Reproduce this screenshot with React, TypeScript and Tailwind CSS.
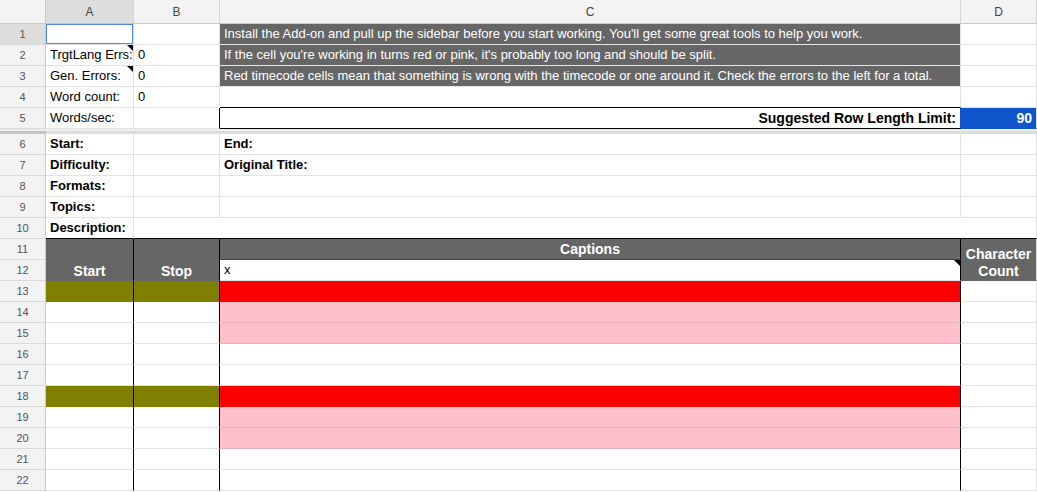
import React from "react";

const GRID = "border-r-[#e2e2e2]";
const GRID_B = "border-b-[#e2e2e2]";

type CellProps = {
  className?: string;
  r?: string;
  b?: string;
  children?: React.ReactNode;
};

function Cell({ className = "", r = GRID, b = GRID_B, children }: CellProps) {
  return (
    <div
      className={`relative flex items-center overflow-hidden whitespace-nowrap border-r border-b px-[4px] text-[13px] ${r} ${b} ${className}`}
    >
      {children}
    </div>
  );
}

function RowNum({ n, active = false }: { n: number; active?: boolean }) {
  return (
    <div
      className={`flex items-center justify-center border-r border-b border-r-[#c8c8c8] border-b-[#dadada] text-[11px] text-[#555] ${
        active ? "bg-[#dddddd]" : "bg-[#f3f3f3]"
      }`}
    >
      {n}
    </div>
  );
}

function ColHead({ label, active = false }: { label: string; active?: boolean }) {
  return (
    <div
      className={`flex items-center justify-center border-r border-b border-r-[#d4d4d4] border-b-[#c8c8c8] text-[12px] text-[#444] ${
        active ? "bg-[#dddddd]" : "bg-[#f3f3f3]"
      }`}
    >
      {label}
    </div>
  );
}

function Note() {
  return (
    <span className="absolute top-0 right-0 h-0 w-0 border-l-[6px] border-t-[6px] border-l-transparent border-t-black" />
  );
}

// rows 13-22: what the A/B and C columns are painted with
const BODY: { n: number; ab?: string; c?: string }[] = [
  { n: 13, ab: "bg-[#808000]", c: "bg-[#ff0000]" },
  { n: 14, c: "bg-[#ffc0cb]" },
  { n: 15, c: "bg-[#ffc0cb]" },
  { n: 16 },
  { n: 17 },
  { n: 18, ab: "bg-[#808000]", c: "bg-[#ff0000]" },
  { n: 19, c: "bg-[#ffc0cb]" },
  { n: 20, c: "bg-[#ffc0cb]" },
  { n: 21 },
  { n: 22 },
];

const INFO = [
  "Install the Add-on and pull up the sidebar before you start working. You'll get some great tools to help you work.",
  "If the cell you're working in turns red or pink, it's probably too long and should be split.",
  "Red timecode cells mean that something is wrong with the timecode or one around it. Check the errors to the left for a total.",
];

const TOP_A = ["", "TrgtLang Errs:", "Gen. Errors:", "Word count:", "Words/sec:"];
const TOP_B = ["", "0", "0", "0", ""];

const MID: [string, string][] = [
  ["Start:", "End:"],
  ["Difficulty:", "Original Title:"],
  ["Formats:", ""],
  ["Topics:", ""],
];

export default function App() {
  return (
    <div className="h-[492px] w-[1037px] overflow-hidden bg-white font-['Liberation_Sans',Arial,sans-serif] text-black">
      <div className="grid grid-cols-[46px_88px_86px_741px_76px] grid-rows-[24px_repeat(5,21px)_5px_repeat(17,21px)]">
        {/* column headers */}
        <div className="border-r border-b border-r-[#c8c8c8] border-b-[#c8c8c8] bg-[#f3f3f3]" />
        <ColHead label="A" active />
        <ColHead label="B" />
        <ColHead label="C" />
        <ColHead label="D" />

        {/* rows 1-5 */}
        {TOP_A.map((a, i) => {
          const row = i + 1;
          return (
            <React.Fragment key={row}>
              <RowNum n={row} active={row === 1} />
              <Cell>
                {row === 1 && (
                  <span className="absolute -top-[1px] -left-[1px] h-[22px] w-[89px] border-2 border-[#4d88ea]" />
                )}
                {a}
                {(row === 2 || row === 3) && <Note />}
              </Cell>
              <Cell r={row === 5 ? "border-r-black" : GRID}>{TOP_B[i]}</Cell>
              {row <= 3 ? (
                <Cell className="bg-[#666666] text-white" b="border-b-[#e6e6e6]">
                  {INFO[i]}
                </Cell>
              ) : row === 4 ? (
                <Cell b="border-b-black" />
              ) : (
                <Cell className="justify-end text-[14px] font-bold" b="border-b-black" r="border-r-[#1155cc]">
                  Suggested Row Length Limit:
                </Cell>
              )}
              {row === 5 ? (
                <Cell className="justify-end bg-[#1155cc] text-[14px] font-bold text-white" b="border-b-[#1155cc]">
                  90
                </Cell>
              ) : (
                <Cell />
              )}
            </React.Fragment>
          );
        })}

        {/* frozen row divider */}
        <div className="col-span-5 flex flex-col">
          <div className="h-[2px] bg-[#eeeeee]" />
          <div className="flex h-[3px]">
            <div className="w-[46px] bg-[#c4c4c4]" />
            <div className="flex-1 bg-[#dcdcdc]" />
          </div>
        </div>

        {/* rows 6-9 */}
        {MID.map(([a, c], i) => (
          <React.Fragment key={i}>
            <RowNum n={i + 6} />
            <Cell className="font-bold">{a}</Cell>
            <Cell />
            <Cell className="font-bold">{c}</Cell>
            <Cell />
          </React.Fragment>
        ))}

        {/* row 10 */}
        <RowNum n={10} />
        <Cell className="font-bold" b="border-b-black">
          Description:
        </Cell>
        <Cell className="col-span-3" b="border-b-black" />

        {/* rows 11-12: caption table header */}
        <RowNum n={11} />
        <Cell
          className="row-span-2 items-end justify-center bg-[#666666] pb-0 text-[14px] leading-[17px] font-bold text-white"
          r="border-r-black"
          b="border-b-[#666666]"
        >
          Start
        </Cell>
        <Cell
          className="row-span-2 items-end justify-center bg-[#666666] pb-0 text-[14px] leading-[17px] font-bold text-white"
          r="border-r-black"
          b="border-b-[#666666]"
        >
          Stop
        </Cell>
        <Cell
          className="justify-center bg-[#666666] text-[14px] font-bold text-white"
          r="border-r-black"
          b="border-b-[#444444]"
        >
          Captions
        </Cell>
        <Cell
          className="row-span-2 items-end justify-center bg-[#666666] px-[2px] pb-0 text-[14px] leading-[17px] font-bold text-white"
          b="border-b-[#666666]"
        >
          <span className="whitespace-normal text-center">Character Count</span>
        </Cell>
        <RowNum n={12} />
        <Cell r="border-r-black">
          x
          <Note />
        </Cell>

        {/* rows 13-22 */}
        {BODY.map(({ n, ab, c }) => (
          <React.Fragment key={n}>
            <RowNum n={n} />
            <Cell className={ab ?? ""} r="border-r-black" b={ab ? "border-b-[#808000]" : GRID_B} />
            <Cell className={ab ?? ""} r="border-r-black" b={ab ? "border-b-[#808000]" : GRID_B} />
            <Cell
              className={c ?? ""}
              r="border-r-black"
              b={c === "bg-[#ffc0cb]" ? "border-b-[#e4b0b9]" : c ? "border-b-[#ff0000]" : GRID_B}
            />
            <Cell />
          </React.Fragment>
        ))}
      </div>
    </div>
  );
}
